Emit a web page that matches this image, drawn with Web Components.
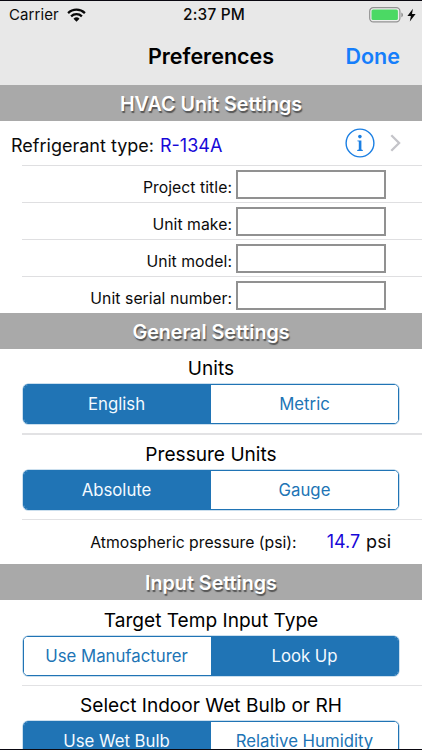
<!DOCTYPE html>
<html lang="en">
<head>
<meta charset="utf-8">
<title>Preferences</title>
<style>
    html, body {
        margin: 0;
        height: 750px;
        overflow: hidden;
    }
    body {
        background: #fff;
        color: #0b0b0b;
        font-family: Inter, "Liberation Sans", sans-serif;
    }
</style>
</head>
<body>
<preferences-screen></preferences-screen>

<script>
class BaseElement extends HTMLElement {
    constructor() {
        super();
        const template = document.createElement('template');
        template.innerHTML = this.constructor.markup;
        this.attachShadow({mode: 'open'}).appendChild(template.content.cloneNode(true));
    }
}

class StatusBar extends BaseElement {
    static markup = `
        <style>
            :host {
                display: grid;
                grid-template-columns: 1fr auto 1fr;
                align-items: center;
                height: 28px;
                padding: 0 6px 0 9px;
                font-size: 15px;
                line-height: 28px;
            }
            .left, .right { display: flex; align-items: center; }
            .left { gap: 8px; letter-spacing: 0.1px; }
            .left svg { margin-top: -1px; }
            .time { font-size: 15.4px; font-weight: 550; letter-spacing: 0.2px; padding-left: 3px; }
            .right { justify-content: flex-end; gap: 3px; }
            svg { display: block; }
        </style>
        <div class="left">
            <span>Carrier</span>
            <svg width="19" height="14" viewBox="0 0 19 14">
                <g fill="none" stroke="#080808" stroke-width="2.3">
                    <path d="M1.1 5.1a12 12 0 0 1 16.8 0"/>
                    <path d="M4.1 8.3a7.8 7.8 0 0 1 10.8 0"/>
                </g>
                <path d="M6.5 10.7a4.3 4.3 0 0 1 6 0l-3 3z" fill="#080808"/>
            </svg>
        </div>
        <span class="time">2:37 PM</span>
        <div class="right">
            <svg width="35" height="16" viewBox="0 0 35 16">
                <rect x="0.7" y="0.7" width="30.2" height="14.2" rx="3.6" fill="#eee" stroke="#929292" stroke-width="1.2"/>
                <rect x="2.5" y="2.5" width="26.4" height="10.6" rx="1.6" fill="#4bd964"/>
                <path d="M32.3 5.4c2.3.8 2.3 4 0 4.8z" fill="#929292"/>
            </svg>
            <svg width="9" height="14" viewBox="0 0 9 14">
                <path d="M5.9.7.4 7.9h3.5l-1.1 5.6 5.8-7.6H5z" fill="#080808"/>
            </svg>
        </div>
    `;
}
customElements.define('status-bar', StatusBar);

class NavBar extends BaseElement {
    static markup = `
        <style>
            :host {
                display: grid;
                grid-template-columns: 1fr auto 1fr;
                height: 56px;
                padding: 0 22px;
                box-sizing: border-box;
                font-size: 21.5px;
                font-weight: 600;
                line-height: 54px;
            }
            .title { grid-column: 2; color: #000; }
            .action { text-align: right; color: #157efb; }
        </style>
        <span class="title"><slot></slot></span>
        <span class="action"><slot name="action"></slot></span>
    `;
}
customElements.define('nav-bar', NavBar);

class SectionHeader extends BaseElement {
    static markup = `
        <style>
            :host {
                display: block;
                height: 36px;
                background: #a9a9a9;
                color: #fff;
                font-size: 19.7px;
                font-weight: 600;
                line-height: 38px;
                text-align: center;
                text-shadow: 1px 2px 1px #555;
            }
        </style>
        <slot></slot>
    `;
}
customElements.define('section-header', SectionHeader);

class RefrigerantRow extends BaseElement {
    static markup = `
        <style>
            :host {
                display: flex;
                align-items: center;
                height: 44px;
                padding: 0 21px 0 11px;
                font-size: 18px;
                line-height: 24px;
            }
            .label, .value { padding-top: 6px; }
            .value { margin-left: 6px; color: #1708d8; }
            .info { margin-left: auto; }
            .chevron { margin-left: 15px; }
            svg { display: block; }
        </style>
        <span class="label"><slot></slot></span>
        <span class="value"><slot name="value"></slot></span>
        <svg class="info" width="30" height="30" viewBox="0 0 30 30">
            <circle cx="15" cy="15" r="13.9" fill="none" stroke="#1b7fe3" stroke-width="1.4"/>
            <circle cx="14.9" cy="8.6" r="1.8" fill="#1b7fe3"/>
            <path d="M12.4 12.4h4v9.2l1.4.5v.8h-5.6v-.8l1.6-.5v-8l-1.4-.4z" fill="#1b7fe3"/>
        </svg>
        <svg class="chevron" width="11" height="18" viewBox="0 0 11 18">
            <path d="M1.3 1.2 9.1 9l-7.8 7.8" fill="none" stroke="#c4c4c9" stroke-width="2.3"/>
        </svg>
    `;
}
customElements.define('refrigerant-row', RefrigerantRow);

class FieldRow extends BaseElement {
    static markup = `
        <style>
            :host {
                display: flex;
                align-items: center;
                justify-content: flex-end;
                gap: 4px;
                height: 37px;
                box-sizing: border-box;
                margin-left: 22px;
                padding: 0 36px 0 0;
                border-top: 1px solid #dfdfe1;
                font-size: 15.75px;
            }
            label { padding-top: 7px; letter-spacing: 0.05px; }
            input {
                width: 150px;
                height: 29px;
                box-sizing: border-box;
                margin: 0;
                border: 2px solid #919191;
                border-radius: 0;
                background: #fff;
                outline: none;
            }
        </style>
        <label for="field"><slot></slot></label>
        <input id="field" type="text" autocomplete="off">
    `;
}
customElements.define('field-row', FieldRow);

class SegmentedControl extends BaseElement {
    static markup = `
        <style>
            :host { display: block; }
            .title {
                height: 35px;
                color: #000;
                font-size: 19.1px;
                line-height: 39px;
                text-align: center;
            }
            .segments {
                display: grid;
                grid-template-columns: 1fr 1fr;
                height: 40px;
                box-sizing: border-box;
                margin: 0 23px;
                border: 1px solid #2074b5;
                border-radius: 5px;
                box-shadow: 0 0 0 0.5px #2074b577;
                overflow: hidden;
            }
            ::slotted(button) {
                margin: 0;
                padding: 0;
                border: 0;
                background: #fff;
                color: #2074b5;
                font: 16.75px Inter, "Liberation Sans", sans-serif;
            }
            ::slotted(button:first-of-type) {
                padding-right: 2px;
            }
            ::slotted(button[selected]) {
                background: #2074b5;
                color: #f4faff;
            }
        </style>
        <div class="title"><slot name="title"></slot></div>
        <div class="segments"><slot></slot></div>
    `;

    connectedCallback() {
        this.addEventListener('click', this._handleClick.bind(this));
    }

    _handleClick(event) {
        const button = event.target.closest('button');
        if (!button) {
            return;
        }
        for (const item of this.querySelectorAll('button')) {
            item.toggleAttribute('selected', item === button);
        }
    }
}
customElements.define('segmented-control', SegmentedControl);

class PressureRow extends BaseElement {
    static markup = `
        <style>
            :host {
                display: flex;
                align-items: baseline;
                justify-content: flex-end;
                height: 44px;
                box-sizing: border-box;
                padding-right: 31px;
                font-size: 15.75px;
                line-height: 44px;
            }
            .value { margin-left: 30px; font-size: 18px; color: #1708d8; }
            .unit { margin-left: 6px; font-size: 18px; }
        </style>
        <span class="label"><slot></slot></span>
        <span class="value"><slot name="value"></slot></span>
        <span class="unit"><slot name="unit"></slot></span>
    `;
}
customElements.define('pressure-row', PressureRow);

class PreferencesScreen extends BaseElement {
    static markup = `
        <style>
            :host {
                display: block;
                width: 422px;
                height: 750px;
                box-sizing: border-box;
                border: solid #0a0810;
                border-width: 1px 0;
                overflow: hidden;
            }
            header { background: #e8e8e8; }
            hr {
                height: 1px;
                margin: 9px 0 0 22px;
                border: 0;
                background: #e2e2e4;
            }
            hr.thick { height: 2px; }
            .input-type { padding-top: 1px; }
        </style>
        <header>
            <status-bar></status-bar>
            <nav-bar>Preferences<span slot="action">Done</span></nav-bar>
        </header>
        <section-header>HVAC Unit Settings</section-header>
        <refrigerant-row>Refrigerant type:<span slot="value">R-134A</span></refrigerant-row>
        <field-row>Project title:</field-row>
        <field-row>Unit make:</field-row>
        <field-row>Unit model:</field-row>
        <field-row>Unit serial number:</field-row>
        <section-header>General Settings</section-header>
        <segmented-control>
            <span slot="title">Units</span>
            <button selected>English</button>
            <button>Metric</button>
        </segmented-control>
        <hr class="thick">
        <segmented-control>
            <span slot="title">Pressure Units</span>
            <button selected>Absolute</button>
            <button>Gauge</button>
        </segmented-control>
        <hr>
        <pressure-row>Atmospheric pressure (psi):<span slot="value">14.7</span><span slot="unit">psi</span></pressure-row>
        <section-header>Input Settings</section-header>
        <segmented-control class="input-type">
            <span slot="title">Target Temp Input Type</span>
            <button>Use Manufacturer</button>
            <button selected>Look Up</button>
        </segmented-control>
        <hr>
        <segmented-control>
            <span slot="title">Select Indoor Wet Bulb or RH</span>
            <button selected>Use Wet Bulb</button>
            <button>Relative Humidity</button>
        </segmented-control>
    `;
}
customElements.define('preferences-screen', PreferencesScreen);
</script>
</body>
</html>
